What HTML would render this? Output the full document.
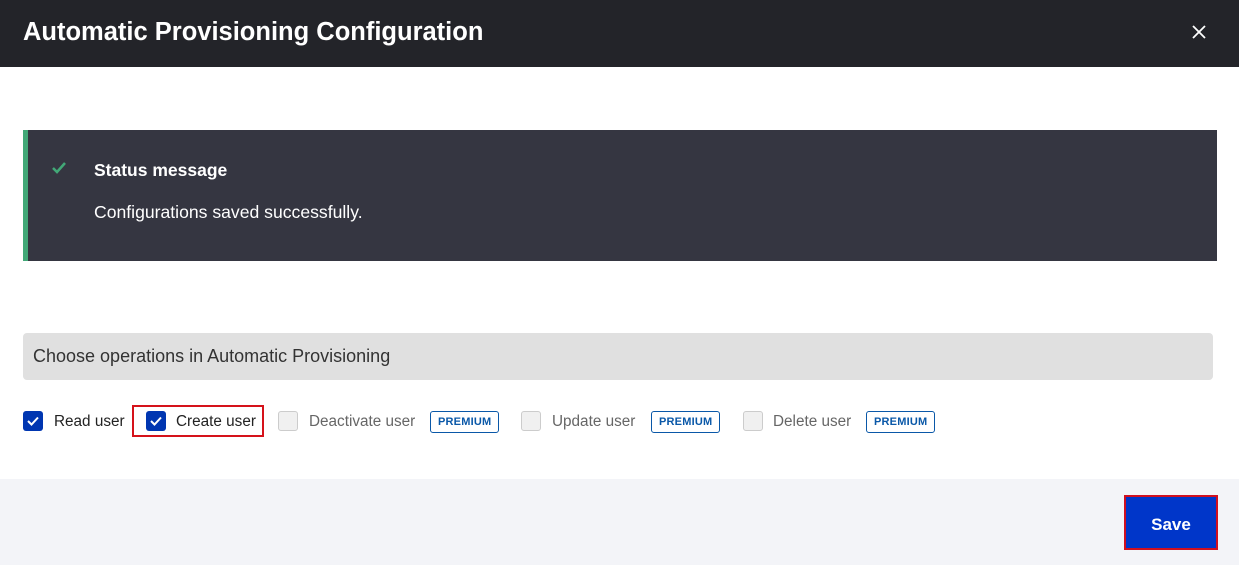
<!DOCTYPE html>
<html><head><meta charset="utf-8"><style>
*{box-sizing:border-box;margin:0;padding:0}
body{width:1239px;height:565px;overflow:hidden;background:#fff;font-family:"Liberation Sans",sans-serif;position:relative}
.hdr{position:absolute;left:0;top:0;width:1239px;height:67px;background:#232429;color:#fff}
.hdr h1{position:absolute;left:23px;top:18px;font-size:25.5px;font-weight:bold}
.x{position:absolute;left:1191px;top:24px}
.msg{position:absolute;left:23px;top:130px;width:1194px;height:131px;background:#353641;border-left:5px solid #42a877;color:#fff}
.msg .t{position:absolute;left:66px;top:30px;font-size:17.5px;font-weight:bold}
.msg .d{position:absolute;left:66px;top:72px;font-size:17.6px}
.msg svg{position:absolute;left:23px;top:31px}
.bar{position:absolute;left:23px;top:333px;width:1190px;height:47px;background:#e0e0e0;border-radius:4px;font-size:18px;color:#333;padding:13px 10px}
.cb{position:absolute;top:411px;width:20px;height:20px;border-radius:3px}
.on{background:#0036b1}
.off{background:#f0f0f0;border:1px solid #ccc}
.lbl{position:absolute;top:413px;font-size:15.3px;color:#222}
.dim{color:#666}
.pr{position:absolute;top:411px;height:22px;border:1px solid #0a58a8;border-radius:3px;color:#0a58a8;font-size:11px;font-weight:bold;padding:4px 7px;letter-spacing:.2px}
.foot{position:absolute;left:0;top:479px;width:1239px;height:86px;background:#f3f4f8}
.save{position:absolute;left:1124px;top:495px;width:94px;height:55px;background:#0036c9;border:2px solid #d01020;color:#fff;font-weight:bold;font-size:17px;text-align:center;line-height:55px}
.red{position:absolute;left:132px;top:405px;width:132px;height:32px;border:2px solid #d5121a}
</style></head><body>
<div class="hdr"><h1>Automatic Provisioning Configuration</h1>
<svg class="x" width="16" height="16" viewBox="0 0 16 16"><path d="M2 2L14 14M14 2L2 14" stroke="#fff" stroke-width="1.8"/></svg></div>
<div class="msg"><svg width="16" height="14" viewBox="0 0 16 14"><path d="M2 7L6 11L14 2" stroke="#42a877" stroke-width="2.5" fill="none"/></svg>
<div class="t">Status message</div><div class="d">Configurations saved successfully.</div></div>
<div class="bar">Choose operations in Automatic Provisioning</div>
<div class="cb on" style="left:23px"><svg width="20" height="20" viewBox="0 0 20 20"><path d="M5 10L8.5 13.5L15 6.5" stroke="#fff" stroke-width="2" fill="none"/></svg></div>
<div class="lbl" style="left:54px">Read user</div>
<div class="red"></div>
<div class="cb on" style="left:146px"><svg width="20" height="20" viewBox="0 0 20 20"><path d="M5 10L8.5 13.5L15 6.5" stroke="#fff" stroke-width="2" fill="none"/></svg></div>
<div class="lbl" style="left:176px">Create user</div>
<div class="cb off" style="left:278px"></div><div class="lbl dim" style="left:309px">Deactivate user</div><div class="pr" style="left:430px">PREMIUM</div>
<div class="cb off" style="left:521px"></div><div class="lbl dim" style="left:552px">Update user</div><div class="pr" style="left:651px">PREMIUM</div>
<div class="cb off" style="left:743px"></div><div class="lbl dim" style="left:773px">Delete user</div><div class="pr" style="left:866px">PREMIUM</div>
<div class="foot"></div>
<div class="save">Save</div>
</body></html>
